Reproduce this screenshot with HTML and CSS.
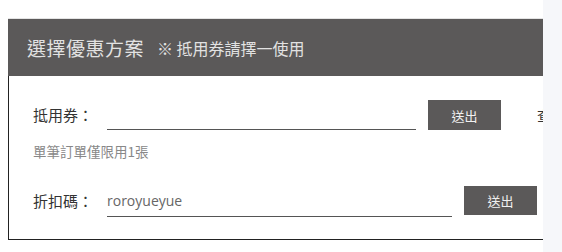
FILE: index.html
```html
<!DOCTYPE html>
<html lang="zh-Hant">
<head>
<meta charset="utf-8">
<link rel="stylesheet" href="styles.css">
</head>
<body>
<div class="page">
  <div class="main">
    <div class="panel-head">
      <span class="title">選擇優惠方案</span>
      <span class="sub">※ 抵用券請擇一使用</span>
    </div>
    <div class="panel-body">
      <div class="row row-coupon">
        <span class="label">抵用券：</span>
        <span class="field field-coupon"></span>
        <button class="btn">送出</button>
        <span class="more">查看</span>
      </div>
      <div class="note">單筆訂單僅限用1張</div>
      <div class="row row-code">
        <span class="label">折扣碼：</span>
        <span class="field field-code">roroyueyue</span>
        <button class="btn btn-code">送出</button>
      </div>
    </div>
  </div>
  <div class="side"></div>
</div>
</body>
</html>
```
FILE: styles.css
```css
html, body {
  margin: 0;
  padding: 0;
  background: #ffffff;
}
body {
  font-family: "Noto Sans CJK TC", "Noto Sans", sans-serif;
  width: 562px;
  height: 252px;
  overflow: hidden;
}
.page {
  display: flex;
  height: 252px;
}
.main {
  width: 535px;
  margin-left: 8px;
  padding-top: 18px;
  overflow: hidden;
  flex: none;
}
.side {
  flex: 1;
  background: #f6f7fa;
}
.panel-head {
  width: 560px;
  height: 58px;
  border-top: 1px solid #e4e4e4;
  background: #5b5959;
  display: flex;
  align-items: center;
  padding-left: 19px;
  box-sizing: border-box;
  color: #e2e2e2;
}
.title {
  font-size: 19px;
  letter-spacing: 0.5px;
}
.sub {
  font-size: 16px;
  margin-left: 13px;
}
.panel-body {
  width: 600px;
  height: 164px;
  box-sizing: border-box;
  border-left: 1px solid #222;
  border-bottom: 1px solid #222;
  padding: 24px 0 0 24px;
}
.row {
  display: flex;
  align-items: flex-start;
}
.label {
  width: 74px;
  flex: none;
  font-size: 15px;
  line-height: 30px;
  color: #333;
}
.field {
  box-sizing: border-box;
  height: 30px;
  border-bottom: 1px solid #555;
  font-size: 14px;
  line-height: 29px;
  color: #666;
  flex: none;
}
.field-coupon {
  width: 309px;
}
.field-code {
  width: 345px;
  height: 31px;
  font-family: "Open Sans", "Noto Sans CJK TC", sans-serif;
}
.btn {
  margin-left: 12px;
  width: 73px;
  height: 30px;
  border: none;
  padding: 0;
  background: #5b5959;
  color: #f0f0f0;
  font-family: "Noto Sans CJK TC", sans-serif;
  font-size: 13px;
  flex: none;
}
.btn-code {
  height: 29px;
}
.more {
  margin-left: 36px;
  font-size: 14px;
  line-height: 30px;
  color: #333;
  white-space: nowrap;
}
.note {
  margin-top: 11px;
  font-size: 13.5px;
  line-height: 20px;
  color: #888;
}
.row-code {
  margin-top: 25px;
}
```
